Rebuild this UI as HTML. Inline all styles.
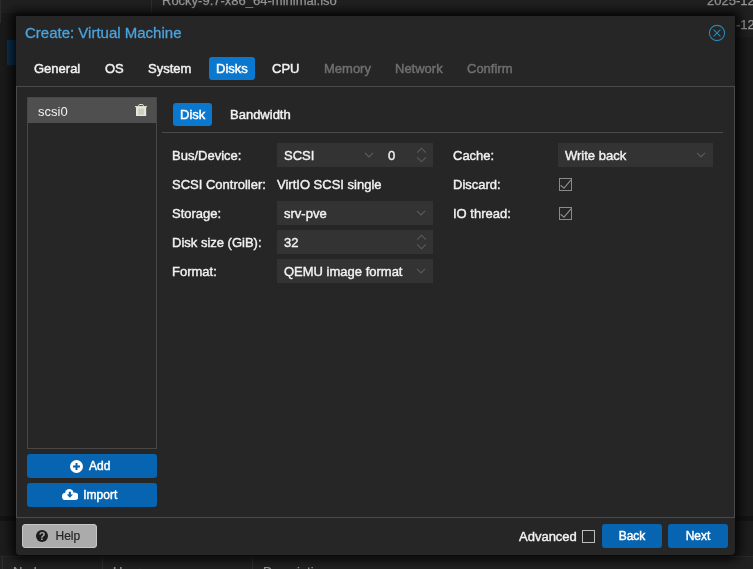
<!DOCTYPE html>
<html>
<head>
<meta charset="utf-8">
<title>Create: Virtual Machine</title>
<style>
*{box-sizing:border-box;margin:0;padding:0}
html,body{width:753px;height:569px;overflow:hidden;background:#1c1c1c}
body{font-family:"Liberation Sans",Arial,sans-serif;font-size:13px;color:#f0f0f0;position:relative}
.abs{position:absolute}
.bg{will-change:transform;position:absolute;left:0;top:0;width:753px;height:569px;background:#1b1b1b;overflow:hidden}
.bgtxt{-webkit-text-stroke:0.25px currentColor;position:absolute;color:#9a9a9a;font-size:13px;line-height:15px;white-space:nowrap}
.win{will-change:transform;position:absolute;left:16px;top:16px;width:719px;height:539px;background:#262626;border-radius:1px 1px 4px 4px;box-shadow:0 0 11px 5px rgba(0,0,0,.8)}
.title{position:absolute;left:9px;top:8px;font-size:15px;color:#4aa3df;white-space:nowrap;line-height:18px;-webkit-text-stroke:0.3px currentColor}
.tab{position:absolute;top:41px;height:23px;line-height:23px;font-size:13px;color:#f2f2f2;white-space:nowrap;padding:0 7px;border-radius:3px;-webkit-text-stroke:0.45px currentColor}
.tab.act{background:#0b78cf;color:#fff}
.tab.dis{color:#6f6f6f}
.panel{position:absolute;left:0;top:70px;width:719px;height:432px;border:1px solid #4a4a4a;border-bottom:none}
.footline{position:absolute;left:0;top:501px;width:719px;height:1px;background:#4a4a4a}
.grid{position:absolute;left:11px;top:81px;width:130px;height:352px;border:1px solid #474747;background:#262626}
.row{position:absolute;left:0;top:0;width:128px;height:25px;background:#4f4f4f;line-height:25px;padding-top:1px;padding-left:10px;color:#f2f2f2}
.btn{position:absolute;background:#0664b0;border-radius:3px;color:#fff;font-size:12px;text-align:center;white-space:nowrap;-webkit-text-stroke:0.45px currentColor}
.lbl{position:absolute;padding-top:1px;font-size:13px;line-height:24px;color:#f2f2f2;white-space:nowrap;-webkit-text-stroke:0.4px currentColor}
.fld{position:absolute;height:24px;background:#333333;line-height:23px;padding-top:1px;padding-left:7px;color:#f2f2f2;white-space:nowrap;-webkit-text-stroke:0.4px currentColor}
.hline{position:absolute;height:1px;background:#4a4a4a}
.cb{position:absolute;width:13px;height:13px;border:1px solid #8a8a8a}
.chev{position:absolute;width:10px;height:6px}
.spin{position:absolute;width:11px;height:16px}
</style>
</head>
<body>
<div class="bg">
  <div class="abs" style="left:0;top:0;width:753px;height:13px;background:#202020"></div>
  <div class="abs" style="left:0;top:0;width:1px;height:23px;background:#2c2c2c"></div>
  <div class="abs" style="left:151px;top:0;width:1px;height:13px;background:#303030"></div>
  <div class="abs" style="left:735px;top:13px;width:18px;height:24px;background:#202020"></div>
  <div class="bgtxt" style="left:162px;top:-7px">Rocky-9.7-x86_64-minimal.iso</div>
  <div class="bgtxt" style="left:707px;top:-7px">2025-12</div>
  <div class="bgtxt" style="left:736px;top:17px">-12</div>
  <div class="abs" style="left:7px;top:40px;width:10px;height:25px;background:#0c3558"></div>
  <div class="abs" style="left:0;top:516px;width:753px;height:5px;background:#141414"></div>
  <div class="abs" style="left:0;top:521px;width:753px;height:35px;background:#1d1d1d"></div>
  <div class="abs" style="left:0;top:556px;width:753px;height:13px;background:#212121;border-top:1px solid #2a2a2a"></div>
  <div class="abs" style="left:2px;top:557px;width:1px;height:12px;background:#303030"></div>
  <div class="abs" style="left:102px;top:557px;width:1px;height:12px;background:#303030"></div>
  <div class="abs" style="left:252px;top:557px;width:1px;height:12px;background:#303030"></div>
  <div class="bgtxt" style="left:13px;top:564px">Node</div>
  <div class="bgtxt" style="left:113px;top:564px">User name</div>
  <div class="bgtxt" style="left:263px;top:564px">Description</div>
</div>

<div class="win">
  <div class="title">Create: Virtual Machine</div>
  <svg class="abs" style="left:692px;top:8px" width="18" height="18" viewBox="0 0 18 18"><circle cx="9" cy="9" r="7.6" fill="none" stroke="#2b87b6" stroke-width="1.1"/><path d="M5.6 5.6 L12.4 12.4 M12.4 5.6 L5.6 12.4" stroke="#2b87b6" stroke-width="1.1" fill="none"/></svg>

  <div class="tab" style="left:11px">General</div>
  <div class="tab" style="left:82px">OS</div>
  <div class="tab" style="left:125px">System</div>
  <div class="tab act" style="left:193px">Disks</div>
  <div class="tab" style="left:249px">CPU</div>
  <div class="tab dis" style="left:301px">Memory</div>
  <div class="tab dis" style="left:372px">Network</div>
  <div class="tab dis" style="left:444px">Confirm</div>

  <div class="panel"></div>

  <div class="grid">
    <div class="row">scsi0
      <svg class="abs" style="left:107px;top:5.8px" width="12" height="12.4" viewBox="0 0 12 12.4"><path d="M3.7 2.4v-0.9a1 1 0 0 1 1-1h2.6a1 1 0 0 1 1 1v0.9" fill="none" stroke="#e6e7d9" stroke-width="1"/><rect x="0" y="2.1" width="12" height="1.1" fill="#e6e7d9"/><path d="M1 3.1h10.2v8.1a1.2 1.2 0 0 1-1.2 1.2h-7.8a1.2 1.2 0 0 1-1.2-1.2z" fill="#e6e7d9"/><path d="M4.2 4.6v6.2M6.1 4.6v6.2M8 4.6v6.2" stroke="#b4b6a6" stroke-width=".9" fill="none"/></svg>
    </div>
  </div>

  <div class="btn" style="left:11px;top:438px;width:130px;height:24px;line-height:24px;text-align:left;padding-left:43px">
    <svg style="margin-right:6px;float:left;margin-top:5.5px" width="13" height="13" viewBox="0 0 12 12"><circle cx="6" cy="6" r="6" fill="#fff"/><path d="M6 2.8v6.4M2.8 6h6.4" stroke="#0560a6" stroke-width="1.8"/></svg>Add</div>
  <div class="btn" style="left:11px;top:467px;width:130px;height:24px;line-height:24px;text-align:left;padding-left:35px">
    <svg style="float:left;margin-right:5px;margin-top:5.7px;margin-left:-0.3px" width="16.5" height="11" viewBox="0 0 16.5 11"><g fill="#fff"><circle cx="3.6" cy="7.4" r="3.6"/><circle cx="7.3" cy="4.2" r="4.2"/><circle cx="12.7" cy="7.2" r="3.8"/><rect x="3.6" y="6" width="9.1" height="5"/></g><path d="M6.8 2.7h2.1v2.7h2.1L7.85 8.7 4.7 5.4h2.1z" fill="#0664b0"/></svg>Import</div>

  <!-- inner tabs -->
  <div class="tab act" style="left:157px;top:87px">Disk</div>
  <div class="tab" style="left:207px;top:87px">Bandwidth</div>
  <div class="hline" style="left:146px;top:116px;width:561px"></div>

  <!-- left column -->
  <div class="lbl" style="left:156px;top:127px">Bus/Device:</div>
  <div class="fld" style="left:261px;top:127px;width:100px">SCSI</div>
  <div class="fld" style="left:361px;top:127px;width:56px;padding-left:11px">0</div>
  <div class="lbl" style="left:156px;top:156px">SCSI Controller:</div>
  <div class="lbl" style="left:261px;top:156px">VirtIO SCSI single</div>
  <div class="lbl" style="left:156px;top:185px">Storage:</div>
  <div class="fld" style="left:261px;top:185px;width:156px">srv-pve</div>
  <div class="lbl" style="left:156px;top:214px">Disk size (GiB):</div>
  <div class="fld" style="left:261px;top:214px;width:156px">32</div>
  <div class="lbl" style="left:156px;top:243px">Format:</div>
  <div class="fld" style="left:261px;top:243px;width:156px">QEMU image format</div>

  <svg class="chev" style="left:348px;top:136px" viewBox="0 0 10 6"><path d="M1 0.8 L5 5 L9 0.8" fill="none" stroke="#5c5c5c" stroke-width="1.1"/></svg>
  <svg class="spin" style="left:400px;top:131px" viewBox="0 0 11 16"><path d="M1.2 5.6 L5.5 1.2 L9.8 5.6 M1.2 10.4 L5.5 14.8 L9.8 10.4" fill="none" stroke="#5c5c5c" stroke-width="1.1"/></svg>
  <svg class="chev" style="left:400px;top:194px" viewBox="0 0 10 6"><path d="M1 0.8 L5 5 L9 0.8" fill="none" stroke="#5c5c5c" stroke-width="1.1"/></svg>
  <svg class="spin" style="left:400px;top:218px" viewBox="0 0 11 16"><path d="M1.2 5.6 L5.5 1.2 L9.8 5.6 M1.2 10.4 L5.5 14.8 L9.8 10.4" fill="none" stroke="#5c5c5c" stroke-width="1.1"/></svg>
  <svg class="chev" style="left:400px;top:252px" viewBox="0 0 10 6"><path d="M1 0.8 L5 5 L9 0.8" fill="none" stroke="#5c5c5c" stroke-width="1.1"/></svg>

  <!-- right column -->
  <div class="lbl" style="left:437px;top:127px">Cache:</div>
  <div class="fld" style="left:542px;top:127px;width:155px">Write back</div>
  <svg class="chev" style="left:680px;top:136px" viewBox="0 0 10 6"><path d="M1 0.8 L5 5 L9 0.8" fill="none" stroke="#5c5c5c" stroke-width="1.1"/></svg>
  <div class="lbl" style="left:437px;top:156px">Discard:</div>
  <div class="cb" style="left:543px;top:162px"></div><svg class="abs" style="left:543px;top:162px" width="13" height="13" viewBox="0 0 13 13"><path d="M1.6 7.2 L5 10.2 L12 1.8" fill="none" stroke="#8a8a8a" stroke-width="1.2"/></svg>
  <div class="lbl" style="left:437px;top:185px">IO thread:</div>
  <div class="cb" style="left:543px;top:191px"></div><svg class="abs" style="left:543px;top:191px" width="13" height="13" viewBox="0 0 13 13"><path d="M1.6 7.2 L5 10.2 L12 1.8" fill="none" stroke="#8a8a8a" stroke-width="1.2"/></svg>

  <div class="footline"></div>
  <div class="abs" style="left:6px;top:508px;width:75px;height:24px;background:#ababab;border:1px solid #c6c6c6;border-radius:3px;color:#262626;-webkit-text-stroke:0.2px #262626;font-size:12px;line-height:22px;padding-left:13px;white-space:nowrap">
    <svg style="vertical-align:-2px;margin-right:7.5px" width="12" height="12" viewBox="0 0 12 12"><circle cx="6" cy="6" r="6" fill="#1c1c1c"/><text x="6.1" y="10" font-size="11" font-weight="bold" text-anchor="middle" fill="#ababab" stroke="none" font-family="Liberation Sans, sans-serif">?</text></svg>Help</div>
  <div class="lbl" style="left:503px;top:508px">Advanced</div>
  <div class="cb" style="left:566px;top:514px;width:13px;height:13px;border-color:#bdbdbd"></div>
  <div class="btn" style="left:586px;top:508px;width:60px;height:24px;line-height:24px">Back</div>
  <div class="btn" style="left:652px;top:508px;width:60px;height:24px;line-height:24px">Next</div>
</div>
</body>
</html>
